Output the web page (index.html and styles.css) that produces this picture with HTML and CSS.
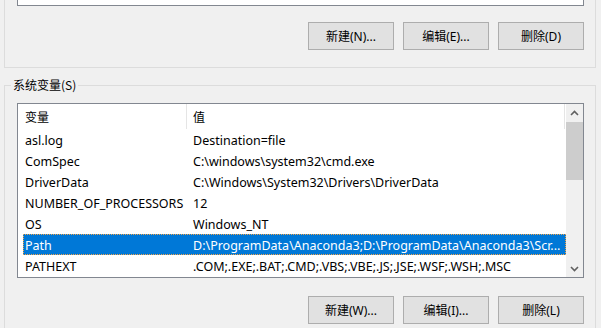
FILE: index.html
```html
<!DOCTYPE html>
<html lang="zh-CN">

<head>
  <meta charset="UTF-8">
  <title>环境变量</title>
  <link rel="stylesheet" href="styles.css">
</head>

<body>
  <!-- user variables (scrolled, only the bottom is visible) -->
  <div class="group user-vars">
    <div class="list list-cut"></div>
    <div class="actions">
      <button class="btn">新建(N)...</button>
      <button class="btn">编辑(E)...</button>
      <button class="btn">删除(D)</button>
    </div>
  </div>

  <fieldset class="group sys-vars">
    <legend>系统变量(S)</legend>
    <div class="list">
      <div class="list-body">
        <div class="list-head">
          <div class="head-cell">变量</div>
          <div class="head-cell">值</div>
        </div>
        <div class="row"><div class="cell">asl.log</div><div class="cell">Destination=file</div></div>
        <div class="row"><div class="cell">ComSpec</div><div class="cell">C:\windows\system32\cmd.exe</div></div>
        <div class="row"><div class="cell">DriverData</div><div class="cell">C:\Windows\System32\Drivers\DriverData</div></div>
        <div class="row"><div class="cell">NUMBER_OF_PROCESSORS</div><div class="cell">12</div></div>
        <div class="row"><div class="cell">OS</div><div class="cell">Windows_NT</div></div>
        <div class="row selected"><div class="cell">Path</div><div class="cell">D:\ProgramData\Anaconda3;D:\ProgramData\Anaconda3\Scr...</div></div>
        <div class="row"><div class="cell">PATHEXT</div><div class="cell">.COM;.EXE;.BAT;.CMD;.VBS;.VBE;.JS;.JSE;.WSF;.WSH;.MSC</div></div>
      </div>
      <div class="scrollbar">
        <div class="sb-btn">
          <svg width="9" height="6" viewBox="0 0 9 6"><polyline points="1,5 4.5,1.5 8,5" fill="none" stroke="#606060" stroke-width="1.6"/></svg>
        </div>
        <div class="sb-track"><div class="sb-thumb"></div></div>
        <div class="sb-btn">
          <svg width="9" height="6" viewBox="0 0 9 6"><polyline points="1,1 4.5,4.5 8,1" fill="none" stroke="#606060" stroke-width="1.6"/></svg>
        </div>
      </div>
    </div>
    <div class="actions">
      <button class="btn">新建(W)...</button>
      <button class="btn">编辑(I)...</button>
      <button class="btn">删除(L)</button>
    </div>
  </fieldset>
</body>

</html>
```

FILE: styles.css
```css
body {
  margin: 0;
  padding: 0 0 0 4px;
  height: 328px;
  overflow: hidden;
  background: #f0f0f0;
  font-family: "Noto Sans", "Noto Sans CJK SC", sans-serif;
  font-size: 12px;
  color: #000;
}

.group {
  width: 592px;
  box-sizing: border-box;
  border: 1px solid #dcdcdc;
  margin: 0;
}

.user-vars {
  border-top: none;
  padding: 0 11px 17px 12px;
}

.sys-vars {
  margin-top: 9px;
  padding: 0 11px 4px 12px;
  border-bottom: none;
}

.sys-vars legend {
  padding: 0 2px;
  margin-left: -6px;
  line-height: 16px;
  font-family: "Noto Sans CJK SC", sans-serif;
}

.list {
  border: 1px solid #828790;
  background: #fff;
}

.list-cut {
  height: 5px;
  border-top: none;
}

.sys-vars .list {
  margin-top: 10px;
  height: 173px;
  display: flex;
}

.list-body {
  flex: 1;
  overflow: hidden;
}

.list-head {
  display: grid;
  grid-template-columns: 169px 378px;
  height: 25px;
}

.head-cell {
  display: flex;
  align-items: center;
  padding-left: 6px;
  border-right: 1px solid #e5e5e5;
  font-family: "Noto Sans CJK SC", sans-serif;
}

.head-cell:first-child {
  padding-left: 7px;
}

.row {
  display: grid;
  grid-template-columns: 164px 1fr;
  height: 21px;
  box-sizing: border-box;
  padding-top: 1px;
  margin-left: 5px;
  align-items: center;
  white-space: nowrap;
  font-size: 12.5px;
}

.cell {
  padding-left: 6px;
  overflow: hidden;
  text-overflow: ellipsis;
}

.cell:first-child {
  padding-left: 2px;
}

.row.selected {
  background: #0078d7;
  color: #fff;
  outline: 1px dotted #f2a54a;
  outline-offset: -1px;
}

.scrollbar {
  width: 17px;
  display: flex;
  flex-direction: column;
  background: #f0f0f0;
}

.sb-btn {
  height: 17px;
  display: flex;
  align-items: center;
  justify-content: center;
}

.sb-track {
  flex: 1;
  padding-top: 1px;
}

.sb-thumb {
  height: 58px;
  background: #cdcdcd;
}

.actions {
  display: flex;
  justify-content: flex-end;
  gap: 9px;
  margin-top: 16px;
}

.sys-vars .actions {
  margin-top: 18px;
}

.btn {
  width: 86px;
  height: 28px;
  padding: 0;
  background: #e1e1e1;
  border: 1px solid #adadad;
  font-family: "Noto Sans", "Noto Sans CJK SC", sans-serif;
  font-size: 12px;
  color: #000;
}
```
